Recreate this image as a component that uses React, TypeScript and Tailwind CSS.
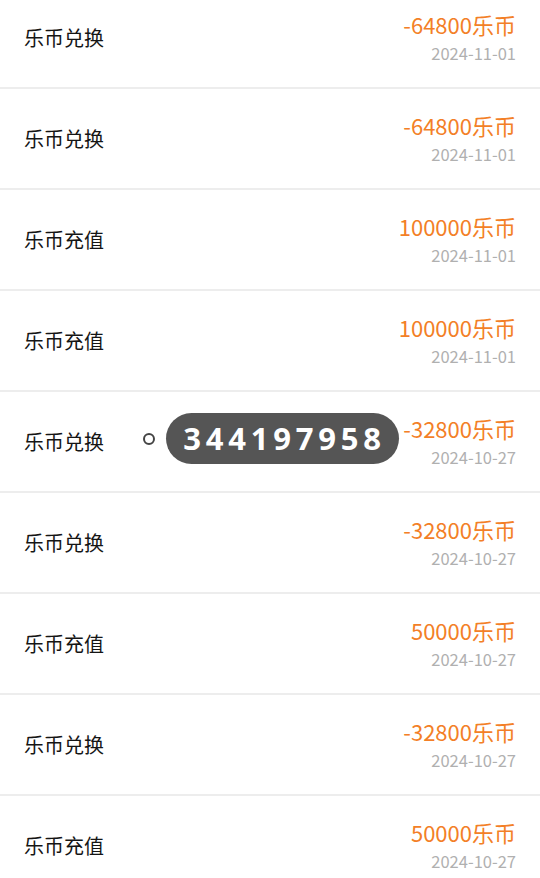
const records = [
  { label: "乐币兑换", amount: "-64800乐币", date: "2024-11-01" },
  { label: "乐币兑换", amount: "-64800乐币", date: "2024-11-01" },
  { label: "乐币充值", amount: "100000乐币", date: "2024-11-01" },
  { label: "乐币充值", amount: "100000乐币", date: "2024-11-01" },
  { label: "乐币兑换", amount: "-32800乐币", date: "2024-10-27" },
  { label: "乐币兑换", amount: "-32800乐币", date: "2024-10-27" },
  { label: "乐币充值", amount: "50000乐币", date: "2024-10-27" },
  { label: "乐币兑换", amount: "-32800乐币", date: "2024-10-27" },
  { label: "乐币充值", amount: "50000乐币", date: "2024-10-27" },
];

const font = { fontFamily: '"Noto Sans CJK SC", "Noto Sans", sans-serif' };

export default function App() {
  return (
    <div className="relative h-[878px] w-[540px] overflow-hidden bg-white" style={font}>
      <ul className="-mt-[12px] flex flex-col">
        {records.map((r, i) => (
          <li
            key={i}
            className="flex h-[101px] shrink-0 items-center justify-between border-b-2 border-[#ededed] pl-6 pr-6"
          >
            <span className="mt-[1px] text-[20px] text-[#151515]">{r.label}</span>
            <div className="-mt-[2px] flex flex-col items-end">
              <span className="text-[22px] leading-[28px] text-[#f37f27]">{r.amount}</span>
              <span className="mt-[4px] text-[16.5px] leading-[22px] text-[#b0b0b0]">{r.date}</span>
            </div>
          </li>
        ))}
      </ul>

      {/* copy toast over the 5th row */}
      <div className="absolute left-[143px] top-[413px] flex items-center gap-[11px]">
        <span className="h-[12px] w-[12px] rounded-full border-2 border-[#444] bg-white" />
        <span
          className="flex h-[51px] w-[233px] items-center justify-center rounded-full bg-[#555555] pl-[4px] text-[31px] font-bold tracking-[4.8px] text-white"
          style={{ fontFamily: '"Open Sans", "Noto Sans", sans-serif' }}
        >
          344197958
        </span>
      </div>
    </div>
  );
}
